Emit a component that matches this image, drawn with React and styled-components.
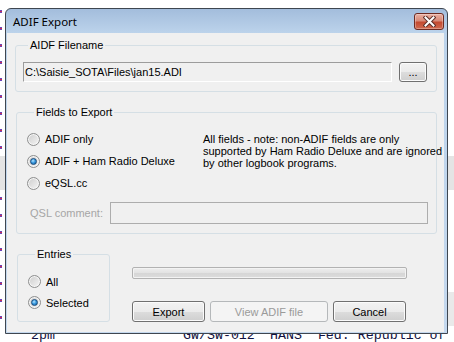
import React from "react";
import styled, { createGlobalStyle } from "styled-components";

const GlobalStyle = createGlobalStyle`
  html, body {
    margin: 0;
    padding: 0;
    background: #fff;
    overflow: hidden;
  }
  body {
    font-family: "Liberation Sans", Arial, sans-serif;
  }
`;

const Desktop = styled.div`
  position: relative;
  width: 454px;
  height: 342px;
  overflow: hidden;
  background: #fff;
`;

// log list that sits behind the dialog
const LogList = styled.div`
  padding-top: 3px;
`;

const LogRow = styled.div`
  height: 17px;
  box-sizing: border-box;
  padding-top: ${(p) => (p.$text ? 3 : 0)}px;
  display: grid;
  grid-template-columns: 31px 152px 87px 1fr;
  align-items: center;
  background: ${(p) =>
    p.$hi === "full"
      ? "#e4e4e4"
      : p.$hi === "right"
      ? "linear-gradient(90deg, #fff 5px, #e9e9e9 5px)"
      : "#fff"};
  font-family: "Liberation Mono", "Courier New", monospace;
  font-size: 13.3px;
  line-height: 14px;
  color: #101040;
  white-space: pre;
`;

const Marker = styled.span`
  width: 2px;
  height: 3px;
  background: linear-gradient(#3d4cf0, #c33050 50%, #3d4cf0);
`;

const Cell = styled.span``;

const Window = styled.div`
  position: absolute;
  left: 5px;
  top: 8px;
  width: 443px;
  height: 326px;
  box-sizing: border-box;
  border: 1px solid #3e4650;
  border-radius: 6px 6px 0 0;
  background: linear-gradient(#a3bddc, #bcd3eb 24px, #c4d8ee);
  display: flex;
  flex-direction: column;
  padding: 0 3px 1px 1px;
`;

const TitleBar = styled.div`
  height: 24px;
  flex: none;
  display: flex;
  align-items: center;
  justify-content: space-between;
  padding: 0 0 0 6px;
`;

const Title = styled.span`
  font-family: "Noto Sans", "Open Sans", sans-serif;
  font-size: 11.5px;
  color: #000;
`;

const CloseButton = styled.div`
  width: 30px;
  height: 17px;
  margin-top: 1px;
  box-sizing: border-box;
  border: 1px solid #6e2b22;
  border-radius: 3px;
  background: linear-gradient(#eab0a2, #d88a78 45%, #c44a30 55%, #d06a50);
  box-shadow: inset 0 0 0 1px rgba(255, 255, 255, 0.3);
  display: flex;
  align-items: center;
  justify-content: center;
`;

const Client = styled.div`
  flex: 1;
  background: #f0f0f0;
  padding: 6px 7px 0 8px;
  display: flex;
  flex-direction: column;
`;

const Group = styled.fieldset`
  margin: ${(p) => p.$margin || "0"};
  padding: ${(p) => p.$pad};
  border: 1px solid #d5dfe5;
  border-radius: 3px;
  min-width: 0;
  width: ${(p) => p.$width || "auto"};
  box-sizing: border-box;
`;

const Legend = styled.legend`
  margin-left: ${(p) => p.$indent || 7}px;
  padding: 0 2px;
  font-size: 11px;
  line-height: 12px;
  color: #000;
`;

const Row = styled.div`
  display: flex;
  align-items: center;
  gap: ${(p) => p.$gap || 0}px;
`;

const TextBox = styled.div`
  flex: 1;
  height: ${(p) => p.$h || 20}px;
  box-sizing: border-box;
  border: 1px solid;
  border-color: ${(p) =>
    p.$disabled ? "#adadad" : "#9c9c9c #fff #fff #9c9c9c"};
  background: #f0f0f0;
  font-size: 11px;
  line-height: 18px;
  padding-left: 1px;
  color: #000;
  white-space: nowrap;
`;

const Button = styled.div`
  width: ${(p) => p.$w}px;
  height: ${(p) => p.$h || 21}px;
  box-sizing: border-box;
  border: 1px solid ${(p) => (p.$disabled ? "#b5b8ba" : "#707070")};
  border-radius: 3px;
  background: ${(p) =>
    p.$disabled
      ? "#f4f4f4"
      : "linear-gradient(#f2f2f2 0%, #ebebeb 50%, #dddddd 50%, #cfcfcf 100%)"};
  box-shadow: inset 0 0 0 1px ${(p) => (p.$disabled ? "#f4f4f4" : "#fbfbfb")};
  display: flex;
  align-items: center;
  justify-content: center;
  font-size: 11px;
  color: ${(p) => (p.$disabled ? "#9a9a9a" : "#000")};
`;

const FieldsBody = styled.div`
  display: flex;
`;

const RadioColumn = styled.div`
  width: 176px;
  flex: none;
  display: flex;
  flex-direction: column;
`;

const RadioRow = styled.label`
  height: ${(p) => p.$h || 22}px;
  display: flex;
  align-items: center;
  font-size: 11px;
  color: #000;
`;

const RadioDot = styled.span`
  position: relative;
  width: 13px;
  height: 13px;
  box-sizing: border-box;
  margin-right: 5px;
  border-radius: 50%;
  border: 1px solid #8e8f8f;
  background: linear-gradient(135deg, #cdcdcd, #f5f5f5);
  box-shadow: inset 0 0 0 1px #f6f6f6;
  flex: none;

  &::after {
    content: "";
    display: ${(p) => (p.$checked ? "block" : "none")};
    position: absolute;
    left: 2px;
    top: 2px;
    width: 7px;
    height: 7px;
    box-sizing: border-box;
    border-radius: 50%;
    border: 1px solid #1b4c7c;
    background: radial-gradient(
      circle at 40% 35%,
      #b6e6ff 0%,
      #3a9ae0 45%,
      #0e5d9c 100%
    );
  }
`;

const Note = styled.div`
  margin-top: 5px;
  font-size: 11px;
  line-height: 12px;
  color: #000;
  white-space: nowrap;
`;

const QslRow = styled.div`
  margin-top: 8px;
  display: flex;
  align-items: center;
`;

const QslLabel = styled.span`
  width: 80px;
  padding-left: 3px;
  font-size: 11px;
  color: #a6a6a6;
`;

const BottomRow = styled.div`
  display: flex;
  align-items: flex-start;
  margin-top: 14px;
`;

const ActionColumn = styled.div`
  margin-left: 22px;
  padding-top: 19px;
  width: 275px;
  display: flex;
  flex-direction: column;
  gap: 22px;
`;

const Progress = styled.div`
  height: 12px;
  box-sizing: border-box;
  border: 1px solid #b2b2b2;
  border-radius: 2px;
  background: linear-gradient(#eeeeee, #e2e2e2 50%, #d6d6d6 50%, #dcdcdc);
  box-shadow: inset 0 0 0 1px #f3f3f3;
`;

const logRows = [
  {}, {}, {}, {}, {}, {}, {}, {}, {},
  { hi: "full", noMark: true },
  { hi: "full", noMark: true },
  {}, {}, {}, {}, {}, {},
  { hi: "right" },
  { hi: "right" },
  { cells: ["2pm", "GW/SW-012", "HANS  Fed. Republic of"] },
];

const CloseIcon = () => (
  <svg width="13" height="11" viewBox="0 0 13 11">
    <path d="M2.5 1.5 L10.5 9.5 M10.5 1.5 L2.5 9.5" stroke="#5b2e28" strokeWidth="4" strokeLinecap="square" />
    <path d="M2.5 1.5 L10.5 9.5 M10.5 1.5 L2.5 9.5" stroke="#fff" strokeWidth="2" strokeLinecap="square" />
  </svg>
);

export default function App() {
  return (
    <Desktop>
      <GlobalStyle />
      <LogList>
        {logRows.map((r, i) => (
          <LogRow key={i} $hi={r.hi} $text={!!r.cells}>
            {r.cells ? (
              <>
                <Cell />
                {r.cells.map((c) => (
                  <Cell key={c}>{c}</Cell>
                ))}
              </>
            ) : (
              !r.noMark && <Marker />
            )}
          </LogRow>
        ))}
      </LogList>

      <Window>
        <TitleBar>
          <Title>ADIF Export</Title>
          <CloseButton>
            <CloseIcon />
          </CloseButton>
        </TitleBar>
        <Client>
          <Group $pad="11px 9px 9px 7px">
            <Legend $indent={5}>AIDF Filename</Legend>
            <Row $gap={7}>
              <TextBox>C:\Saisie_SOTA\Files\jan15.ADI</TextBox>
              <Button $w={28} $h={20}>...</Button>
            </Row>
          </Group>

          <Group $margin="14px 0 0 1px" $pad="10px 8px 9px 10px">
            <Legend>Fields to Export</Legend>
            <FieldsBody>
              <RadioColumn>
                <RadioRow>
                  <RadioDot />
                  ADIF only
                </RadioRow>
                <RadioRow>
                  <RadioDot $checked />
                  ADIF + Ham Radio Deluxe
                </RadioRow>
                <RadioRow>
                  <RadioDot />
                  eQSL.cc
                </RadioRow>
              </RadioColumn>
              <Note>
                All fields - note: non-ADIF fields are only
                <br />
                supported by Ham Radio Deluxe and are ignored
                <br />
                by other logbook programs.
              </Note>
            </FieldsBody>
            <QslRow>
              <QslLabel>QSL comment:</QslLabel>
              <TextBox $disabled $h={22} />
            </QslRow>
          </Group>

          <BottomRow>
            <Group $margin="0 0 0 2px" $pad="11px 8px 8px 10px" $width="93px">
              <Legend>Entries</Legend>
              <RadioRow $h={21}>
                <RadioDot />
                All
              </RadioRow>
              <RadioRow $h={21}>
                <RadioDot $checked />
                Selected
              </RadioRow>
            </Group>
            <ActionColumn>
              <Progress />
              <Row $gap={5}>
                <Button $w={73}>Export</Button>
                <Button $w={118} $disabled>
                  View ADIF file
                </Button>
                <Button $w={73}>Cancel</Button>
              </Row>
            </ActionColumn>
          </BottomRow>
        </Client>
      </Window>
    </Desktop>
  );
}
